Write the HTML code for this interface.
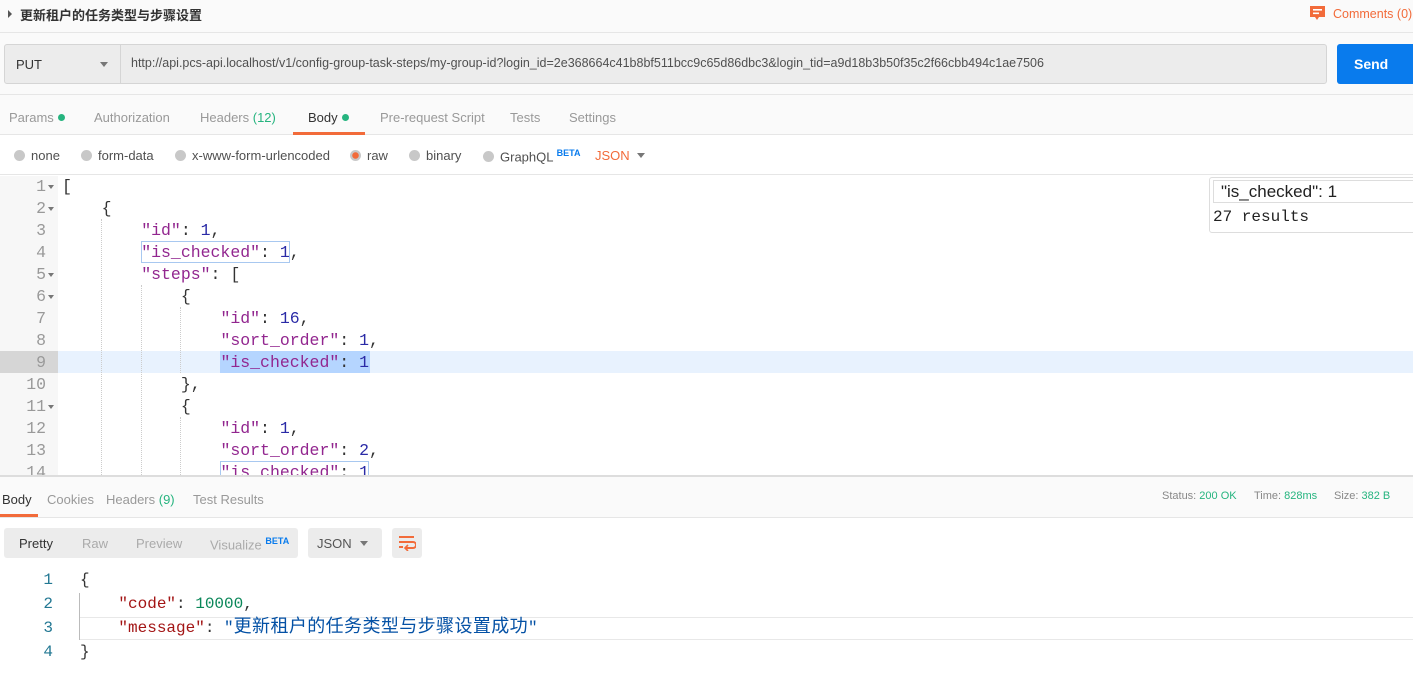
<!DOCTYPE html>
<html><head><meta charset="utf-8"><style>
*{margin:0;padding:0;box-sizing:border-box}
body{width:1413px;height:700px;overflow:hidden;background:#fff;font-family:"Liberation Sans","Noto Sans CJK SC",sans-serif;font-size:13px;color:#505050;position:relative}
.a{position:absolute}
.mono{font-family:"Liberation Mono","Noto Sans CJK SC",monospace}
.k{color:#92268f}.n{color:#2a2aa6}
.rk{color:#a31515}.rn{color:#098658}.rs{color:#0451a5}
.dot{display:inline-block;width:7px;height:7px;border-radius:50%;background:#26b47f;margin-left:4px;vertical-align:1px}
.rad{display:inline-block;width:11px;height:11px;border-radius:50%;background:#c8c8c8;margin-right:6px;vertical-align:-1px}
.gl{position:absolute;width:0;border-left:1px dotted #ccc}
.ar{position:absolute;left:48px;width:0;height:0;border-left:3px solid transparent;border-right:3px solid transparent;border-top:4px solid #777}
</style></head><body>
<!-- top bar -->
<div class="a" style="left:0;top:0;width:1413px;height:33px;background:#fafafa;border-bottom:1px solid #e6e6e6"></div>
<div class="a" style="left:8px;top:10px;width:0;height:0;border-top:4px solid transparent;border-bottom:4px solid transparent;border-left:4px solid #555"></div>
<div class="a" style="left:20px;top:5px;font-size:13px;color:#333;font-weight:bold">更新租户的任务类型与步骤设置</div>
<svg class="a" style="left:1309px;top:5px" width="17" height="17" viewBox="0 0 17 17"><path d="M1 1h15v11H10l-2 3-2-3H1z" fill="#f26b3a"/><rect x="4" y="4" width="9" height="1.6" fill="#fff"/><rect x="4" y="7.5" width="6" height="1.6" fill="#fff"/></svg>
<div class="a" style="left:1333px;top:7px;font-size:12.5px;color:#f26b3a">Comments (0)</div>
<!-- url row -->
<div class="a" style="left:0;top:33px;width:1413px;height:62px;background:#fafafa;border-bottom:1px solid #e6e6e6"></div>
<div class="a" style="left:4px;top:44px;width:1323px;height:40px;background:#ececec;border:1px solid #d5d5d5;border-radius:3px"></div>
<div class="a" style="left:120px;top:45px;width:1px;height:38px;background:#d5d5d5"></div>
<div class="a" style="left:16px;top:57px;font-size:13px;color:#333">PUT</div>
<div class="a" style="left:100px;top:62px;width:0;height:0;border-left:4px solid transparent;border-right:4px solid transparent;border-top:5px solid #777"></div>
<div class="a" style="left:131px;top:56px;font-size:12.5px;color:#505050">http://api.pcs-api.localhost/v1/config-group-task-steps/my-group-id?login_id=2e368664c41b8bf511bcc9c65d86dbc3&amp;login_tid=a9d18b3b50f35c2f66cbb494c1ae7506</div>
<div class="a" style="left:1337px;top:44px;width:76px;height:40px;background:#097bed;border-radius:3px 0 0 3px"></div>
<div class="a" style="left:1354px;top:56px;font-size:14px;color:#fff;font-weight:bold">Send</div>
<!-- tabs -->
<div class="a" style="left:0;top:95px;width:1413px;height:40px;background:#fafafa;border-bottom:1px solid #e6e6e6"></div>
<div class="a" style="top:110px;left:9px;color:#999">Params<span class="dot"></span></div>
<div class="a" style="top:110px;left:94px;color:#999">Authorization</div>
<div class="a" style="top:110px;left:200px;color:#999">Headers <span style="color:#26b47f">(12)</span></div>
<div class="a" style="top:110px;left:308px;color:#333">Body<span class="dot"></span></div>
<div class="a" style="left:293px;top:132px;width:72px;height:3px;background:#f26b3a"></div>
<div class="a" style="top:110px;left:380px;color:#999">Pre-request Script</div>
<div class="a" style="top:110px;left:510px;color:#999">Tests</div>
<div class="a" style="top:110px;left:569px;color:#999">Settings</div>
<!-- body options -->
<div class="a" style="left:0;top:135px;width:1413px;height:40px;background:#fff;border-bottom:1px solid #e6e6e6"></div>
<div class="a" style="top:148px;left:14px"><span class="rad"></span>none</div>
<div class="a" style="top:148px;left:81px"><span class="rad"></span>form-data</div>
<div class="a" style="top:148px;left:175px"><span class="rad"></span>x-www-form-urlencoded</div>
<div class="a" style="top:148px;left:350px"><span class="rad" style="background:radial-gradient(#f26b3a 3px,#c8c8c8 3.5px)"></span>raw</div>
<div class="a" style="top:148px;left:409px"><span class="rad"></span>binary</div>
<div class="a" style="top:148px;left:483px"><span class="rad"></span>GraphQL <sup style="color:#097bed;font-size:9px;font-weight:bold">BETA</sup></div>
<div class="a" style="top:148px;left:595px;color:#f26b3a">JSON</div>
<div class="a" style="left:637px;top:153px;border-left:4px solid transparent;border-right:4px solid transparent;border-top:5px solid #777"></div>
<!-- editor -->
<div class="a" style="left:0;top:176px;width:58px;height:299px;background:#f7f7f7"></div>
<div class="a" style="left:58px;top:351px;width:1355px;height:22px;background:#e8f2fe"></div>
<div class="a" style="left:0;top:351px;width:58px;height:22px;background:#d6d6d6"></div>
<div class="a" style="left:220px;top:351px;width:150px;height:22px;background:#b5d5ff"></div>
<div class="a" style="left:141px;top:241px;width:149px;height:22px;border:1px solid #a8c8f0"></div>
<div class="a" style="left:220px;top:461px;width:149px;height:22px;border:1px solid #a8c8f0"></div>
<div class="gl" style="left:101px;top:219px;height:256px"></div>
<div class="gl" style="left:141px;top:285px;height:190px"></div>
<div class="gl" style="left:180px;top:307px;height:66px"></div>
<div class="gl" style="left:180px;top:417px;height:58px"></div>
<div class="a" style="left:0;top:176px;width:1413px;height:299px;overflow:hidden">
<pre class="mono a" style="left:0;top:0;width:46px;text-align:right;font-size:16.5px;line-height:22px;color:#999">1
2
3
4
5
6
7
8
9
10
11
12
13
14</pre>
<div class="ar" style="top:9px"></div><div class="ar" style="top:31px"></div><div class="ar" style="top:97px"></div><div class="ar" style="top:119px"></div><div class="ar" style="top:229px"></div>
<pre class="mono a" style="left:62px;top:0;font-size:16.5px;line-height:22px;color:#333">[
    {
        <span class="k">"id"</span>: <span class="n">1</span>,
        <span class="k">"is_checked"</span>: <span class="n">1</span>,
        <span class="k">"steps"</span>: [
            {
                <span class="k">"id"</span>: <span class="n">16</span>,
                <span class="k">"sort_order"</span>: <span class="n">1</span>,
                <span class="k">"is_checked"</span>: <span class="n">1</span>
            },
            {
                <span class="k">"id"</span>: <span class="n">1</span>,
                <span class="k">"sort_order"</span>: <span class="n">2</span>,
                <span class="k">"is_checked"</span>: <span class="n">1</span></pre>
</div>
<!-- search box -->
<div class="a" style="left:1209px;top:177px;width:210px;height:56px;background:#fff;border:1px solid #ddd;border-radius:3px"></div>
<div class="a" style="left:1213px;top:180px;width:205px;height:23px;border:1px solid #ddd;font-size:17px;color:#222;padding-left:7px;line-height:21px">"is_checked": 1</div>
<div class="a mono" style="left:1213px;top:208px;font-size:16px;color:#222">27 results</div>
<!-- response tabs -->
<div class="a" style="left:0;top:475px;width:1413px;height:43px;background:#fafafa;border-top:2px solid #ddd;border-bottom:1px solid #e6e6e6"></div>
<div class="a" style="top:492px;left:2px;color:#333">Body</div>
<div class="a" style="left:0;top:514px;width:38px;height:3px;background:#f26b3a"></div>
<div class="a" style="top:492px;left:47px;color:#999">Cookies</div>
<div class="a" style="top:492px;left:106px;color:#999">Headers <span style="color:#26b47f">(9)</span></div>
<div class="a" style="top:492px;left:193px;color:#999">Test Results</div>
<div class="a" style="top:490px;left:1162px;font-size:11px;color:#888">Status: <span style="color:#26b47f">200 OK</span></div>
<div class="a" style="top:490px;left:1254px;font-size:11px;color:#888">Time: <span style="color:#26b47f">828ms</span></div>
<div class="a" style="top:490px;left:1334px;font-size:11px;color:#888">Size: <span style="color:#26b47f">382 B</span></div>
<!-- toolbar -->
<div class="a" style="left:4px;top:528px;width:294px;height:30px;background:#ececec;border-radius:3px"></div>
<div class="a" style="top:536px;left:19px;color:#333">Pretty</div>
<div class="a" style="top:536px;left:82px;color:#aaa">Raw</div>
<div class="a" style="top:536px;left:136px;color:#aaa">Preview</div>
<div class="a" style="top:536px;left:210px;color:#aaa">Visualize <sup style="color:#097bed;font-size:9px;font-weight:bold">BETA</sup></div>
<div class="a" style="left:308px;top:528px;width:74px;height:30px;background:#ececec;border-radius:3px"></div>
<div class="a" style="top:536px;left:317px;color:#555">JSON</div>
<div class="a" style="left:360px;top:541px;border-left:4px solid transparent;border-right:4px solid transparent;border-top:5px solid #777"></div>
<div class="a" style="left:392px;top:528px;width:30px;height:30px;background:#ececec;border-radius:3px"></div>
<svg class="a" style="left:398px;top:535px" width="18" height="16" viewBox="0 0 18 16"><path d="M1 2h15M1 7h14a3 3 0 0 1 0 6H8M1 12h4" stroke="#f26b3a" stroke-width="2" fill="none"/><path d="M10 10l-3 3 3 3" stroke="#f26b3a" stroke-width="1.6" fill="none"/></svg>
<!-- response code -->
<div class="a" style="left:79px;top:593px;width:1px;height:47px;background:#bbb"></div>
<div class="a" style="left:80px;top:617px;width:1333px;height:23px;border-top:1px solid #e8e8e8;border-bottom:1px solid #e8e8e8"></div>
<pre class="mono a" style="left:0;top:568px;width:53px;text-align:right;font-size:16px;line-height:24px;color:#237893">1
2
3
4</pre>
<pre class="mono a" style="left:80px;top:568px;font-size:16px;line-height:24px;color:#333">{
    <span class="rk">"code"</span>: <span class="rn">10000</span>,
    <span class="rk">"message"</span>: <span class="rs">"<span style="font-size:18px;letter-spacing:0.4px">更新租户的任务类型与步骤设置成功</span>"</span>
}</pre>
</body></html>
